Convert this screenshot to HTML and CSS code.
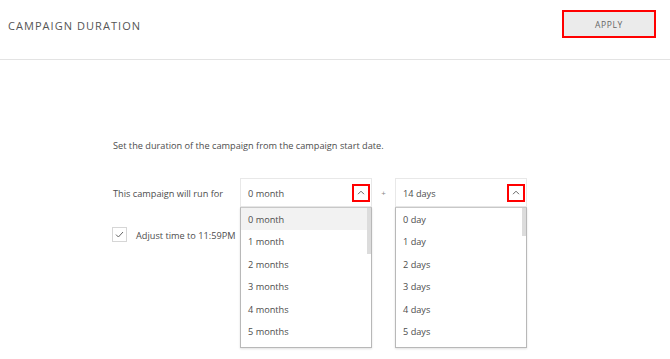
FILE: index.html
```html
<!DOCTYPE html>
<html>
<head>
<meta charset="utf-8">
<link rel="stylesheet" href="styles.css">
</head>
<body>
<header class="topbar">
  <h1 class="title">CAMPAIGN DURATION</h1>
  <button class="apply">APPLY</button>
</header>
<main class="content">
  <p class="intro">Set the duration of the campaign from the campaign start date.</p>
  <div class="run-row">
    <span class="run-label">This campaign will run for</span>
    <div class="select">
      <div class="select-box">
        <span class="select-value">0 month</span>
        <span class="caret-box"><svg width="8" height="5" viewBox="0 0 8 5"><path d="M1 4.2 L4 1.2 L7 4.2" fill="none" stroke="#666" stroke-width="1"/></svg></span>
      </div>
      <ul class="menu">
        <li class="active">0 month</li>
        <li>1 month</li>
        <li>2 months</li>
        <li>3 months</li>
        <li>4 months</li>
        <li>5 months</li>
      </ul>
      <span class="thumb thumb-months"></span>
    </div>
    <span class="plus">+</span>
    <div class="select">
      <div class="select-box">
        <span class="select-value">14 days</span>
        <span class="caret-box"><svg width="8" height="5" viewBox="0 0 8 5"><path d="M1 4.2 L4 1.2 L7 4.2" fill="none" stroke="#666" stroke-width="1"/></svg></span>
      </div>
      <ul class="menu">
        <li>0 day</li>
        <li>1 day</li>
        <li>2 days</li>
        <li>3 days</li>
        <li>4 days</li>
        <li>5 days</li>
      </ul>
      <span class="thumb thumb-days"></span>
    </div>
  </div>
  <label class="adjust">
    <span class="checkbox"><svg width="9" height="7" viewBox="0 0 9 7"><path d="M1 3.6 L3.4 6 L8 1" fill="none" stroke="#666" stroke-width="1"/></svg></span>
    <span class="adjust-text">Adjust time to 11:59PM</span>
  </label>
</main>
</body>
</html>
```
FILE: styles.css
```css
* { box-sizing: border-box; }
html, body { height: 100%; }
body {
  margin: 0;
  min-height: 359px;
  font-family: "Open Sans", "Liberation Sans", sans-serif;
  color: #4d4d4d;
  background: #fff;
}
.topbar {
  display: flex;
  justify-content: space-between;
  align-items: center;
  padding: 12px 14px 19px 8px;
  border-bottom: 1px solid #e3e3e3;
}
.title {
  margin: 0;
  font-size: 11px;
  font-weight: 400;
  letter-spacing: 1.05px;
  color: #555;
  line-height: 28px;
}
.apply {
  width: 94px;
  height: 28px;
  margin-top: -2px;
  margin-bottom: 2px;
  border: 2px solid #f00;
  background: #ebebeb;
  font-family: "Open Sans", "Liberation Sans", sans-serif;
  font-size: 8.5px;
  letter-spacing: 0.6px;
  color: #666;
  padding: 1px 0 0;
}
.content {
  padding: 78px 0 0 113px;
  min-height: 299px;
  font-size: 9.2px;
}
.intro {
  margin: 0;
  padding-top: 1px;
  line-height: 14px;
}
.run-row {
  display: flex;
  align-items: center;
  margin-top: 25px;
  height: 29px;
}
.run-label {
  width: 127px;
  padding-top: 2px;
}
.plus {
  width: 23px;
  text-align: center;
  color: #888;
  font-size: 8px;
}
.select {
  position: relative;
  width: 132px;
  height: 29px;
}
.select-box {
  height: 29px;
  border: 1px solid #e8e8e8;
  display: flex;
  align-items: center;
  justify-content: space-between;
  padding: 0 1px 0 7px;
}
.select-value {
  padding-top: 2px;
}
.caret-box {
  width: 18px;
  height: 18px;
  border: 2px solid #f00;
  display: flex;
  align-items: center;
  justify-content: center;
}
.menu {
  position: absolute;
  top: 29px;
  left: 0;
  width: 132px;
  height: 141px;
  margin: 0;
  padding: 0;
  list-style: none;
  overflow: hidden;
  background: #fff;
  border: 1px solid #b8b8b8;
  border-top-color: #c8c8c8;
  box-shadow: 0 1px 2px rgba(0,0,0,0.12);
}
.menu li {
  height: 22.4px;
  line-height: 24px;
  padding-left: 7px;
}
.menu li.active {
  background: #f2f2f2;
}
.thumb {
  position: absolute;
  top: 30px;
  right: 1px;
  width: 4px;
  background: #dcdcdc;
}
.thumb-months { height: 46px; }
.thumb-days { height: 28px; }
.adjust {
  display: flex;
  align-items: center;
  margin-top: 20px;
  height: 15px;
}
.checkbox {
  width: 15px;
  height: 15px;
  border: 1px solid #d6d6d6;
  display: flex;
  align-items: center;
  justify-content: center;
  margin-left: -1px;
}
.adjust-text {
  margin-left: 9px;
  padding-top: 1px;
}
```
